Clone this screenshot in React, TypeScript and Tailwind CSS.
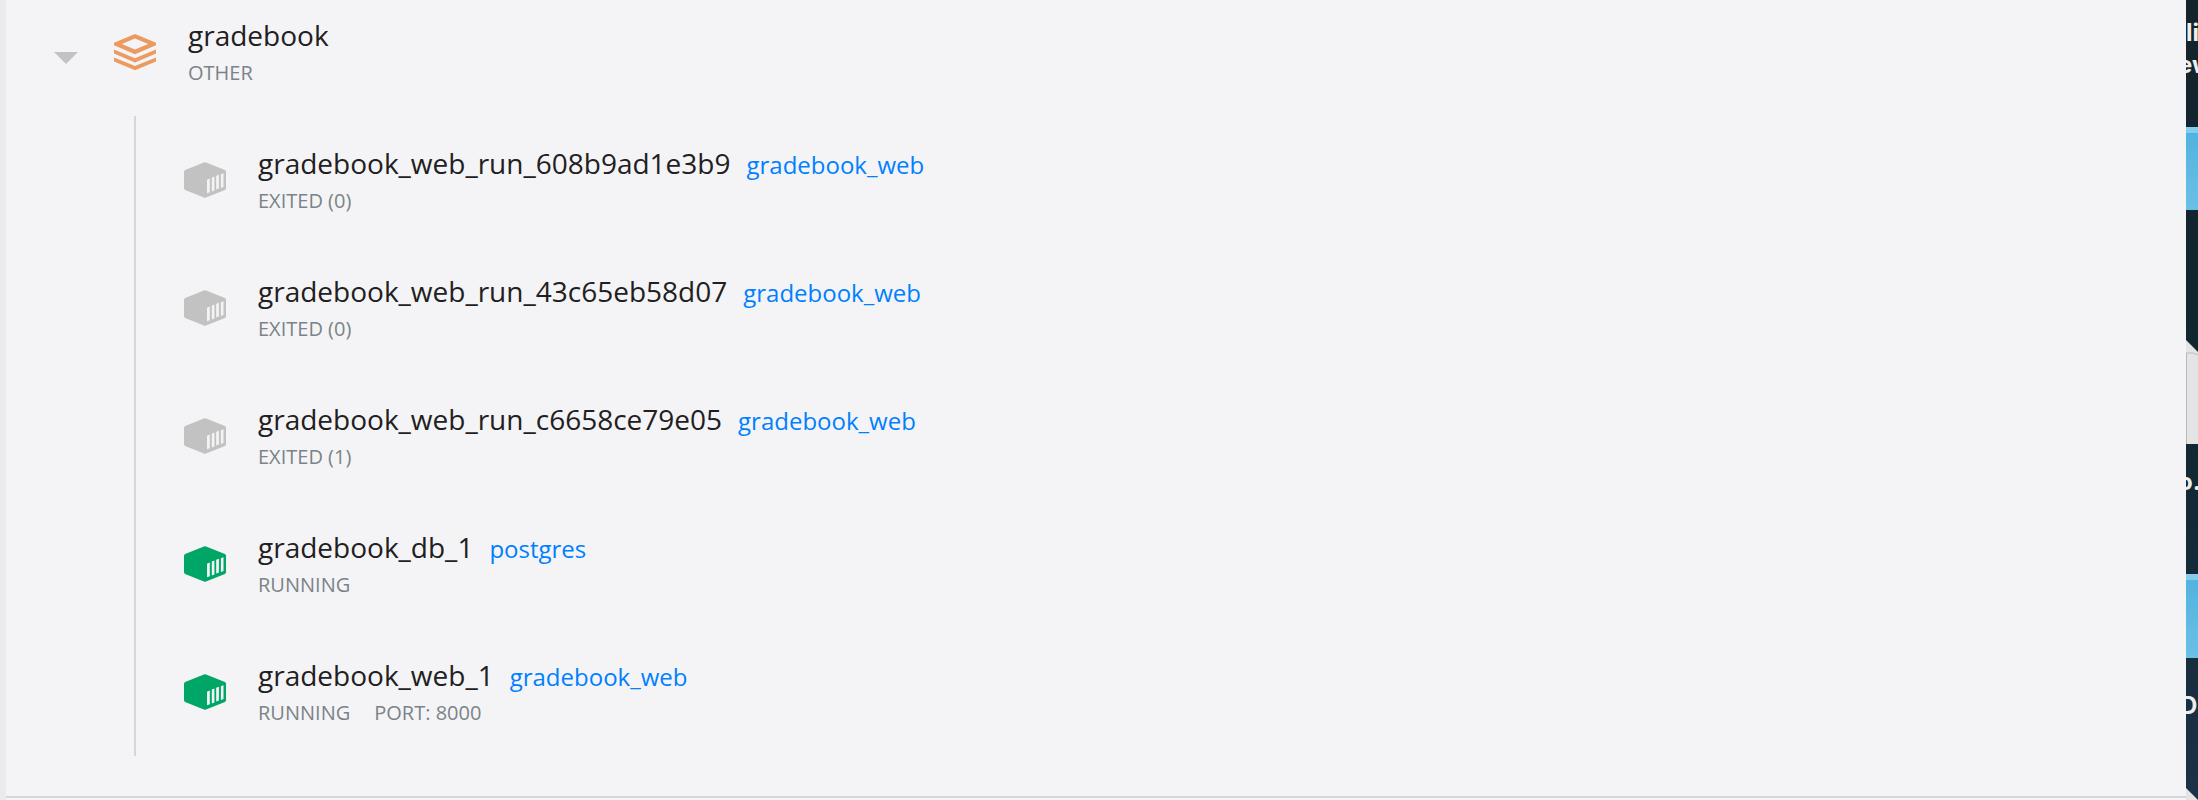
type Container = {
  name: string;
  image: string;
  status: string;
  port?: string;
  running: boolean;
};

const containers: Container[] = [
  { name: "gradebook_web_run_608b9ad1e3b9", image: "gradebook_web", status: "EXITED (0)", running: false },
  { name: "gradebook_web_run_43c65eb58d07", image: "gradebook_web", status: "EXITED (0)", running: false },
  { name: "gradebook_web_run_c6658ce79e05", image: "gradebook_web", status: "EXITED (1)", running: false },
  { name: "gradebook_db_1", image: "postgres", status: "RUNNING", running: true },
  { name: "gradebook_web_1", image: "gradebook_web", status: "RUNNING", port: "PORT: 8000", running: true },
];

function StackIcon() {
  return (
    <svg viewBox="0 0 42 36" className="h-9 w-[42px] shrink-0 fill-[#eb9a60]" aria-hidden="true">
      <path
        fillRule="evenodd"
        d="M21 0 42 8.700v2.600L21 20.200 0 11.300V8.700ZM21 4.600 7.800 10 21 15.500 34.200 10Z"
      />
      <path d="M0 15.600 21 24.200 42 15.600v4L21 28.400 0 19.600Z" />
      <path d="M0 23.400 21 32 42 23.400v4L21 36.200 0 27.400Z" />
    </svg>
  );
}

function ContainerIcon({ running }: { running: boolean }) {
  return (
    <svg
      viewBox="0 0 42 36"
      className={running ? "h-9 w-[42px] shrink-0 fill-[#00a666]" : "h-9 w-[42px] shrink-0 fill-[#c2c2c2]"}
      aria-hidden="true"
    >
      <path d="M19.900.400Q21-.1 22.100.400L40.900 8Q42 8.500 42 9.700V26.300Q42 27.500 40.900 28L22.100 35.600Q21 36.100 19.900 35.600L1.100 28Q0 27.500 0 26.300V9.700Q0 8.500 1.100 8Z" />
      <g className="fill-[#f4f4f6]">
        <path d="M23 17.700 25.800 16.600V30.200L23 31.300Z" />
        <path d="M27.800 15.500 30.400 14.500V28.500L27.800 29.500Z" />
        <path d="M32.200 13.700 34.900 12.700V26.500L32.200 27.500Z" />
        <path d="M36.900 12.300 39.500 11.300V24.900L36.900 25.900Z" />
      </g>
    </svg>
  );
}

function ContainerRow({ container }: { container: Container }) {
  return (
    <li className="flex h-32 items-center gap-8 pl-12">
      <ContainerIcon running={container.running} />
      <div>
        <div className="flex items-baseline gap-4 text-[28px] leading-[42px] text-[#1f2022]">
          <span>{container.name}</span>
          <a href="#image" className="text-2xl leading-8 text-[#0080ff]">
            {container.image}
          </a>
        </div>
        <div className="flex gap-6 text-xl leading-[34px] text-[#7b8388]">
          <span>{container.status}</span>
          {container.port && <span>{container.port}</span>}
        </div>
      </div>
    </li>
  );
}

function DesktopStrip() {
  return (
    <aside className="relative w-3 shrink-0 overflow-hidden bg-linear-to-b from-[#14242d] via-[#10262f] to-[#1b3247] font-['Inter',sans-serif] text-2xl leading-8 font-bold text-[#ededed]">
      <span className="absolute top-[17px] left-0">li</span>
      <span className="absolute top-[49px] -left-2">ew</span>
      <div className="absolute top-[127px] h-[83px] w-full border-t-[6px] border-[#86cdec] bg-linear-to-b from-[#52b3df] to-[#6ac0e6]" />
      <svg viewBox="0 0 12 104" className="absolute top-[340px] h-[104px] w-3" aria-hidden="true">
        <path d="M0 0 12 12V104H0Z" className="fill-[#e4e4e4]" />
        <path d="M0 13Q8 12 12 15" className="fill-none stroke-[#bdbdbd]" />
        <path d="M0.500 13V104" className="fill-none stroke-[#b8b8b8]" />
      </svg>
      <span className="absolute top-[466px] -left-2">o.</span>
      <div className="absolute top-[574px] h-[84px] w-full border-t-[6px] border-[#86cdec] bg-linear-to-b from-[#52b3df] to-[#6ac0e6]" />
      <span className="absolute top-[690px] -left-1.5">D</span>
      <svg viewBox="0 0 12 12" className="absolute top-[788px] h-3 w-3" aria-hidden="true">
        <path d="M0 0 12 12H0Z" className="fill-[#e4e4e4]" />
      </svg>
    </aside>
  );
}

export default function App() {
  return (
    <div className="flex min-h-screen bg-[#f4f4f6] font-['Open_Sans',sans-serif]">
      <div className="w-1.5 shrink-0 bg-[#e9ebef]" />
      <main className="flex min-w-0 grow flex-col pb-0.5">
        <section className="grow border-b-2 border-[#d6d6d8]">
          <header className="mb-3 flex h-[104px] items-center pl-12">
            <button type="button" aria-label="Collapse gradebook" className="mr-9 pt-3">
              <svg viewBox="0 0 24 12" className="h-3 w-6 fill-[#c2c2c2]" aria-hidden="true">
                <path d="M0 0H24L12 12Z" />
              </svg>
            </button>
            <StackIcon />
            <div className="ml-8">
              <h1 className="text-[28px] leading-[42px] text-[#1f2022]">gradebook</h1>
              <p className="text-xl leading-[34px] text-[#7b8388]">OTHER</p>
            </div>
          </header>
          <ul className="ml-32 border-l-2 border-[#d6d6d8]">
            {containers.map((container) => (
              <ContainerRow key={container.name} container={container} />
            ))}
          </ul>
        </section>
      </main>
      <DesktopStrip />
    </div>
  );
}
